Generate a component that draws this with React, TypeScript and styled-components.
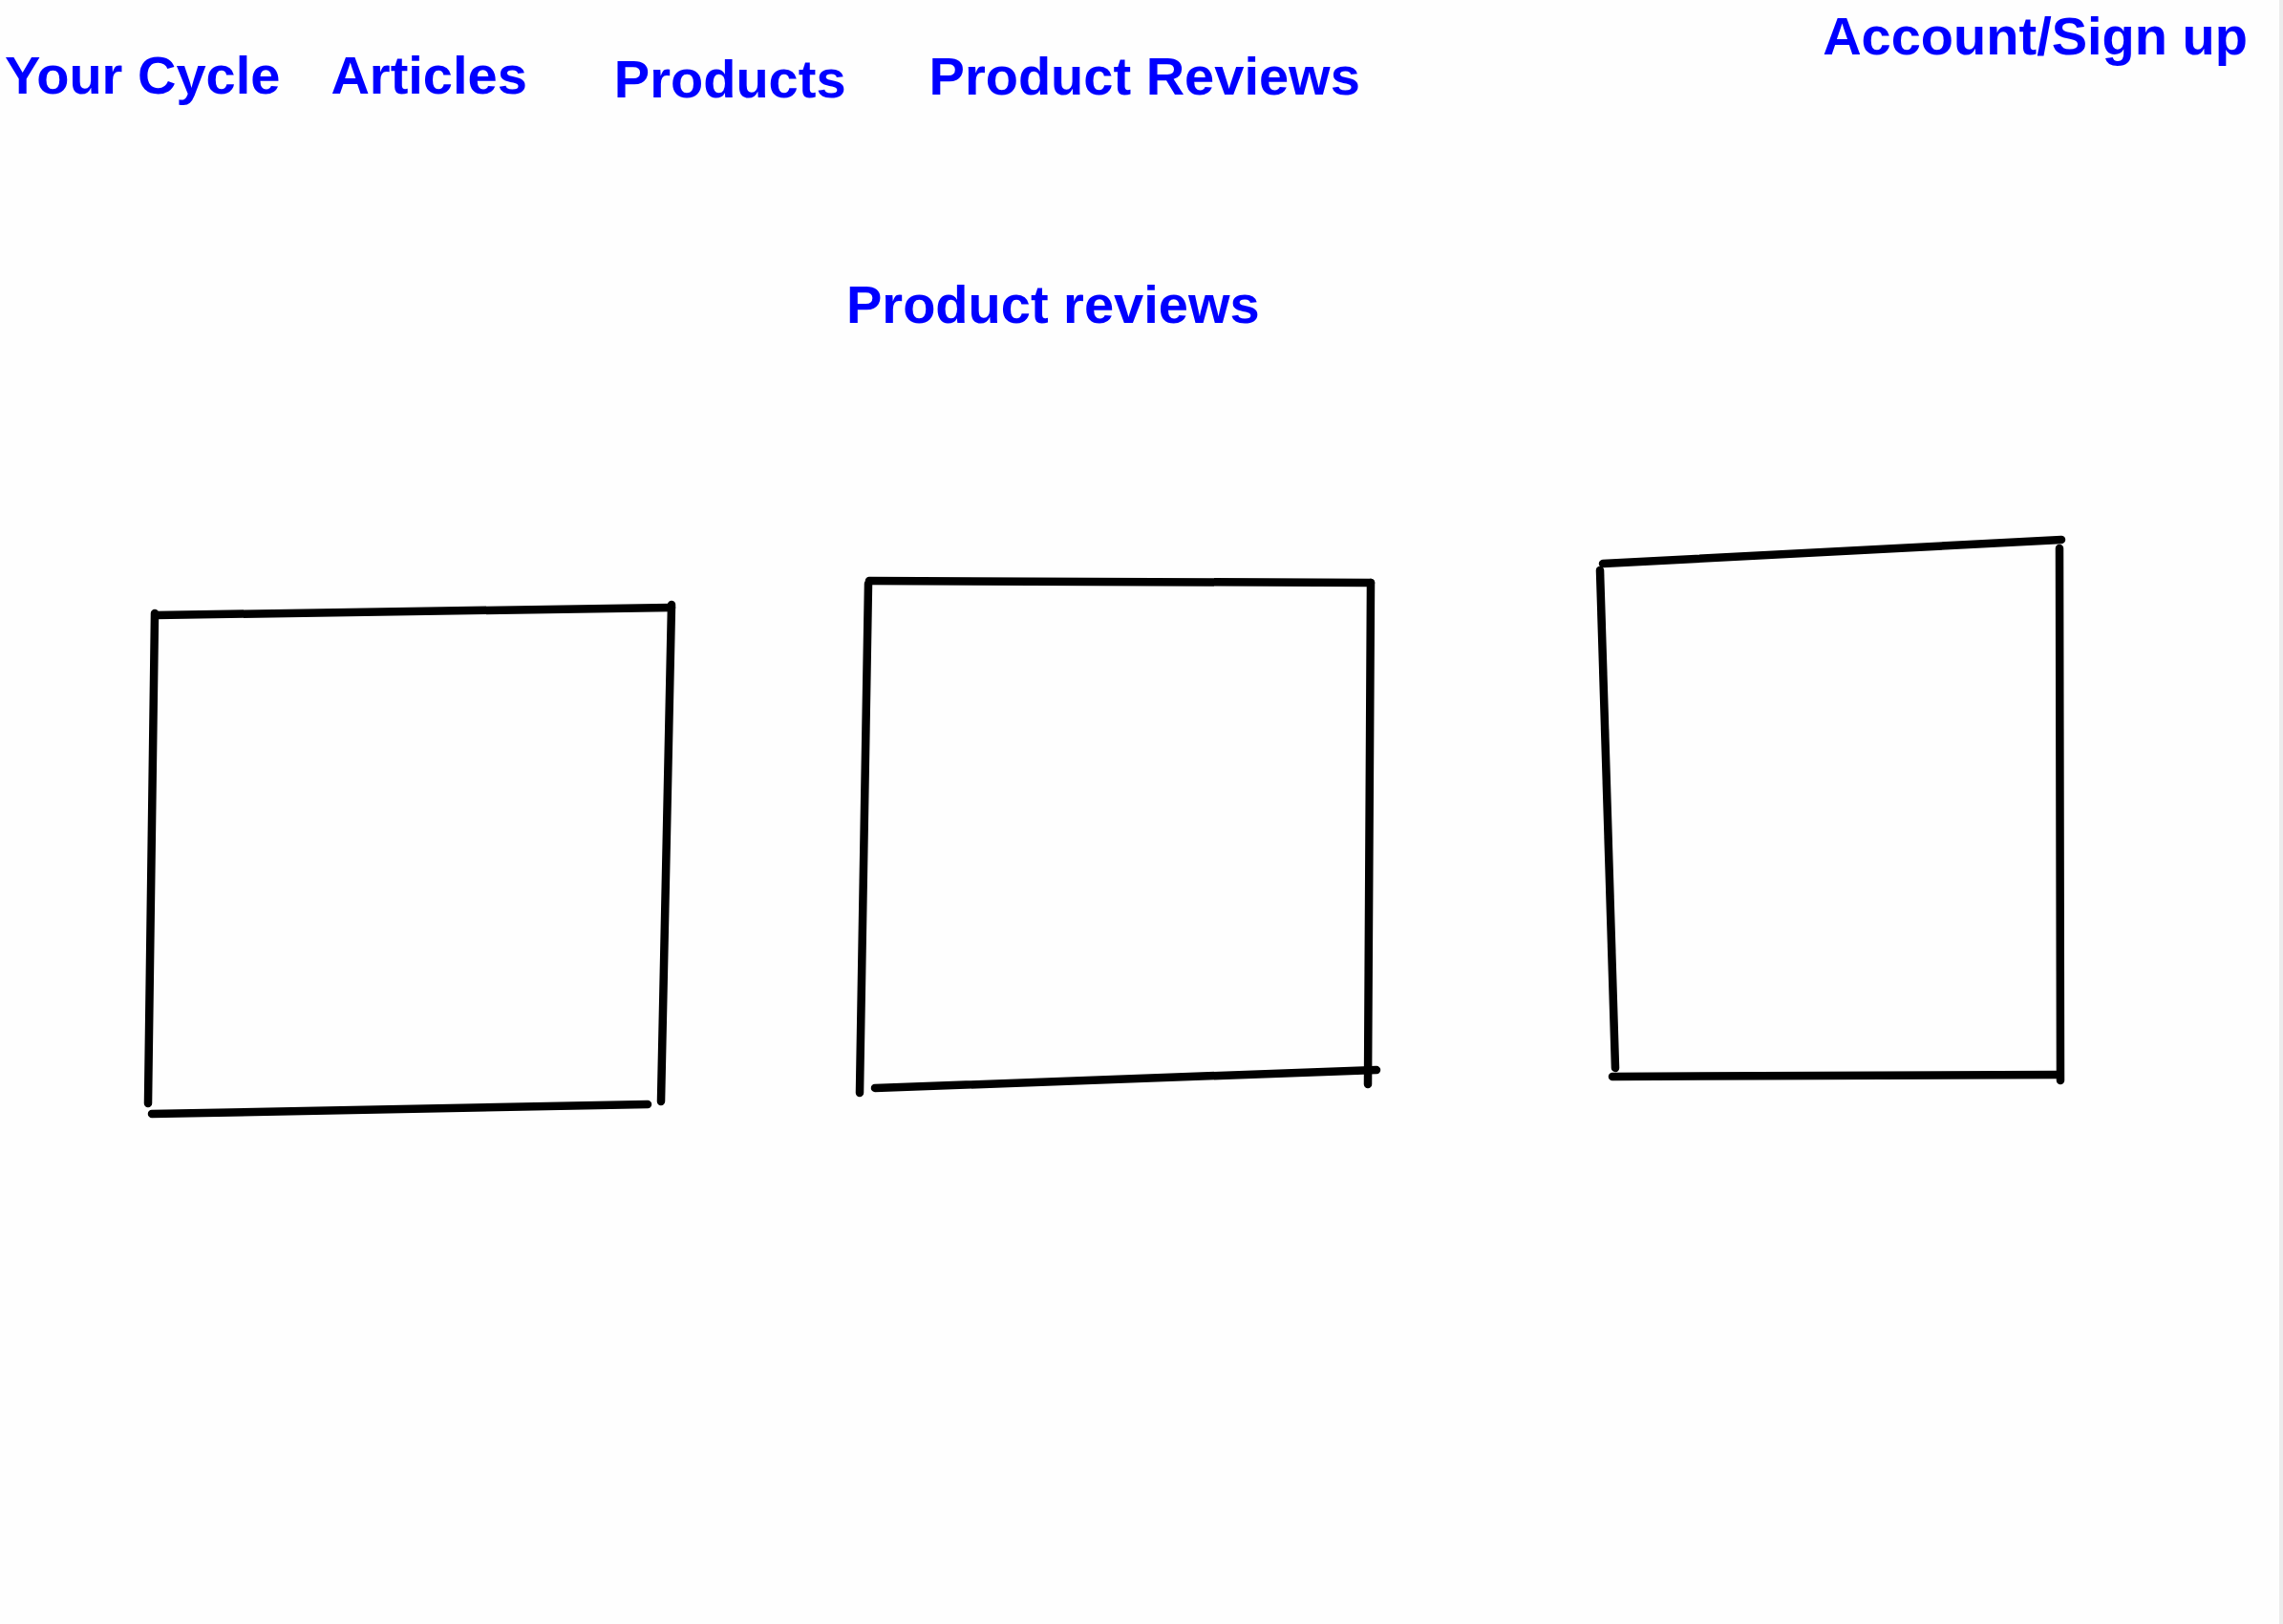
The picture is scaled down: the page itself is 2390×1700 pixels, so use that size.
import React from "react";
import styled, { createGlobalStyle } from "styled-components";

const GlobalStyle = createGlobalStyle`
  html, body {
    margin: 0;
    padding: 0;
    background: #fefefe;
  }
  * { box-sizing: border-box; }
`;

const Page = styled.div`
  width: 2390px;
  height: 1700px;
  background: #fefefe;
  border-right: 4px solid #ececec;
  font-family: "Liberation Sans", Arial, sans-serif;
  overflow: hidden;
`;

const Nav = styled.nav`
  display: flex;
  align-items: flex-start;
  padding-right: 33px;
`;

const NavLink = styled.a<{ $ml: number; $mt: number }>`
  display: block;
  margin-left: ${(p) => p.$ml}px;
  margin-top: ${(p) => p.$mt}px;
  font-size: 56px;
  line-height: 64px;
  font-weight: 700;
  color: #0000ff;
  text-decoration: none;
  white-space: nowrap;
  cursor: pointer;
`;

const AccountLink = styled(NavLink)`
  margin-left: auto;
`;

const Heading = styled.h1`
  margin: 172px 0 0 0;
  padding-left: 886px;
  font-size: 56px;
  line-height: 64px;
  font-weight: 700;
  color: #0000ff;
`;

const CardRow = styled.section`
  display: flex;
  align-items: flex-start;
  margin-top: 205px;
  padding-left: 148px;
`;

const Card = styled.div<{ $ml: number; $mt: number; $w: number; $h: number }>`
  flex: none;
  margin-left: ${(p) => p.$ml}px;
  margin-top: ${(p) => p.$mt}px;
  width: ${(p) => p.$w}px;
  height: ${(p) => p.$h}px;
`;

const Sketch = styled.svg`
  display: block;
  width: 100%;
  height: 100%;
  overflow: visible;
`;

type Line = [number, number, number, number];

const cards: { ml: number; mt: number; w: number; h: number; lines: Line[] }[] = [
  {
    ml: 0,
    mt: 72,
    w: 566,
    h: 548,
    lines: [
      [15, 16, 555, 8],
      [14, 14, 7, 527],
      [555, 5, 544, 525],
      [11, 538, 530, 528],
    ],
  },
  {
    ml: 179,
    mt: 44,
    w: 556,
    h: 552,
    lines: [
      [17, 8, 542, 10],
      [16, 11, 7, 544],
      [542, 10, 539, 535],
      [23, 539, 548, 520],
    ],
  },
  {
    ml: 216,
    mt: 0,
    w: 500,
    h: 580,
    lines: [
      [13, 34, 493, 9],
      [10, 41, 26, 562],
      [491, 18, 492, 575],
      [23, 571, 488, 569],
    ],
  },
];

export default function App() {
  return (
    <Page>
      <GlobalStyle />
      <Nav>
        <NavLink $ml={5} $mt={47}>Your Cycle</NavLink>
        <NavLink $ml={53} $mt={47}>Articles</NavLink>
        <NavLink $ml={91} $mt={51}>Products</NavLink>
        <NavLink $ml={87} $mt={48}>Product Reviews</NavLink>
        <AccountLink $ml={0} $mt={6}>Account/Sign up</AccountLink>
      </Nav>
      <Heading>Product reviews</Heading>
      <CardRow>
        {cards.map((c, i) => (
          <Card key={i} $ml={c.ml} $mt={c.mt} $w={c.w} $h={c.h}>
            <Sketch viewBox={`0 0 ${c.w} ${c.h}`}>
              {c.lines.map(([x1, y1, x2, y2], j) => (
                <line
                  key={j}
                  x1={x1}
                  y1={y1}
                  x2={x2}
                  y2={y2}
                  stroke="#000"
                  strokeWidth={8.5}
                  strokeLinecap="round"
                />
              ))}
            </Sketch>
          </Card>
        ))}
      </CardRow>
    </Page>
  );
}
